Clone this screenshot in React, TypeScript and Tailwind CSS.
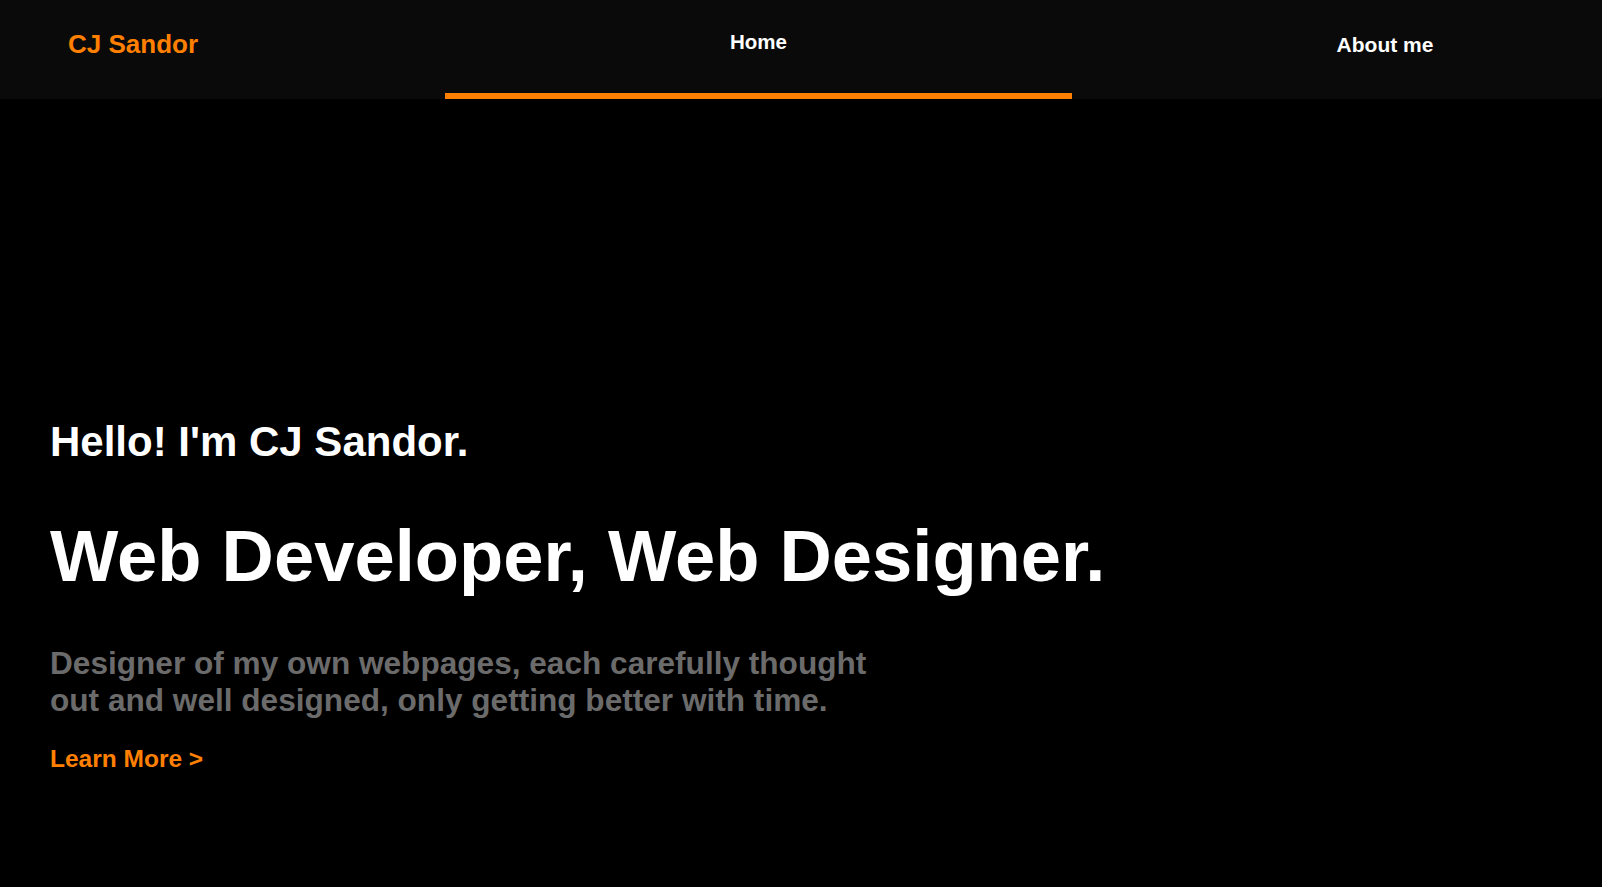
import React from "react";

export default function App() {
  return (
    <div
      className="min-h-[887px] w-full overflow-hidden bg-black text-white"
      style={{ fontFamily: '"Liberation Sans", Arial, sans-serif' }}
    >
      <header className="flex h-[99px] w-full overflow-hidden bg-[#0a0a0a]">
        <div className="w-[445px] shrink-0 pl-[68px] pt-[30px]">
          <span className="text-[26px] font-bold leading-[29px] text-[#ff8000]">CJ Sandor</span>
        </div>
        <div className="relative flex w-[627px] shrink-0 justify-center pt-[30px]">
          <span className="text-[20.5px] font-bold leading-[24px] text-white">Home</span>
          <div className="absolute bottom-0 left-0 h-[6px] w-full bg-[#ff8000]" />
        </div>
        <div className="flex w-[626px] shrink-0 justify-center pt-[33px]">
          <span className="text-[21px] font-bold leading-[24px] text-white">About me</span>
        </div>
      </header>

      <main className="pl-[50px] pt-[319px]">
        <h2 className="text-[42px] font-bold leading-[48px] text-white">Hello! I'm CJ Sandor.</h2>
        <h1 className="mt-[48px] text-[72.4px] font-bold leading-[83px] text-white">
          Web Developer, Web Designer.
        </h1>
        <p className="mt-[48px] w-[830px] text-[31.6px] font-bold leading-[37px] text-[#6b6b6b]">
          Designer of my own webpages, each carefully thought out and well designed, only getting
          better with time.
        </p>
        <a href="#" className="mt-[25px] block text-[24.5px] font-bold leading-[29px] text-[#ff8000]">
          Learn More &gt;
        </a>
      </main>
    </div>
  );
}
